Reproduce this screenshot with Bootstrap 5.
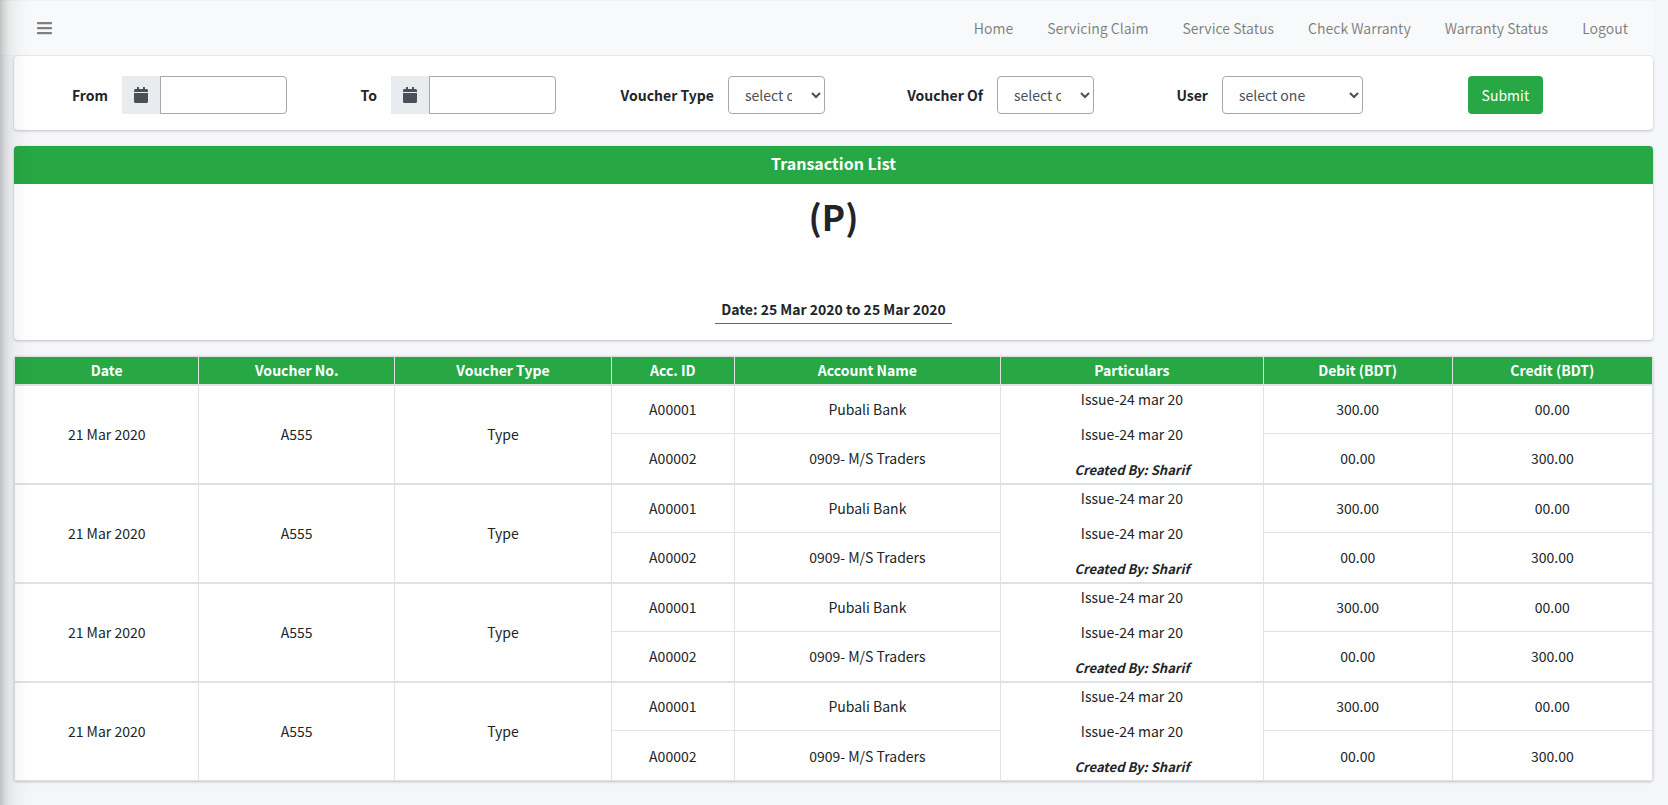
<!DOCTYPE html>
<html lang="en">
<head>
<meta charset="utf-8">
<meta name="viewport" content="width=device-width, initial-scale=1">
<title>Transaction List</title>
<link href="https://cdn.jsdelivr.net/npm/bootstrap@5.3.0/dist/css/bootstrap.min.css" rel="stylesheet">
<style>
  :root { --green: #28a745; --line: #dee2e6; }
  body {
    font-family: "Source Sans Pro", "Noto Sans CJK JP", sans-serif;
    font-size: 14px; line-height: 24px; color: #212529; background: #f4f6f9;
  }
  .page-wrap { padding: 0 15px 24px 14px; }
  .top-nav { height: 56px; padding: 0 8px 0 0; margin-left: -14px; background: #f8f9fa; border-top: 1px solid #f1f2f4; border-bottom: 1px solid #f1f2f4; }
  .top-nav .nav-link { padding: 8px 17px; color: rgba(0,0,0,.5); }
  .menu-toggle { margin-left: 24px; line-height: 0; }
  .panel { border: 0; border-radius: 4px; margin-bottom: 16px; box-shadow: 0 0 1px rgba(0,0,0,.125), 0 1px 3px rgba(0,0,0,.2); }
  .filter-form { padding: 20px 13px 16px 12px; }
  .filter-form label { margin-right: 14px; white-space: nowrap; }
  .filter-form .form-control { height: 38px; font-size: 14px; color: #495057; border-color: #a2a8ad; border-radius: 4px; padding: 6px 12px; }
  .filter-form select.form-control { appearance: auto; width: 97px; flex: none; padding-right: 16px; padding-left: 12px; }
  .filter-form select.wide { width: 141px; padding-right: 12px; }
  .date-group { width: 165px; flex: none; }
  .date-group .input-group-text { width: 39px; padding: 0; justify-content: center; background: #e9ecef; border: 0; border-radius: 0; color: #495057; }
  .filter-form .date-group .form-control { border-radius: 0 4px 4px 0; }
  .btn-green { height: 38px; width: 75px; padding: 0; font-size: 14px; color: #fff; background: var(--green); border-radius: 4px; }
  .panel-title { height: 38px; background: var(--green); color: #fff; font-size: 16px; line-height: 34px; border-radius: 4px 4px 0 0; }
  .report-head { height: 156px; padding: 8px 0 16px; }
  .report-name { font-size: 35px; line-height: 48px; font-weight: 700; }
  .report-date { padding: 0 6px; border-bottom: 1px solid #666; line-height: 27px; }
  .ledger { margin: 0; width: 100%; border-collapse: collapse; table-layout: fixed; font-size: 14px; line-height: 24px; text-align: center; color: #212529; background: #fff; }
  .ledger th, .ledger td { border: 1px solid var(--line); padding: 0; vertical-align: middle; }
  .ledger thead th { background: var(--green); color: #fff; height: 28px; border-bottom-width: 2px; }
  .ledger tbody { border-top: 2px solid var(--line); }
  .ledger tbody tr { height: 50px; }
  .ledger tbody tr:first-child { height: 49px; }
  .ledger p { line-height: 19px; margin-bottom: 16px; }
  .ledger .created { margin-bottom: 0; font-size: 13px; font-weight: 700; font-style: italic; }
  .side-drawer { position: fixed; top: -40px; bottom: -40px; left: -250px; width: 250px; background: #343a40; box-shadow: 0 14px 28px rgba(0,0,0,.25), 0 10px 10px rgba(0,0,0,.22); }
</style>
</head>
<body>
<div class="page-wrap">
  <nav class="top-nav d-flex align-items-center justify-content-between">
    <button type="button" class="btn menu-toggle" aria-label="Toggle menu">
      <svg width="15" height="16" viewBox="0 0 448 512" preserveAspectRatio="none" fill="#808080"><path d="M16 132h416c8.837 0 16-7.163 16-16V76c0-8.837-7.163-16-16-16H16C7.163 60 0 67.163 0 76v40c0 8.837 7.163 16 16 16zm0 160h416c8.837 0 16-7.163 16-16v-40c0-8.837-7.163-16-16-16H16c-8.837 0-16 7.163-16 16v40c0 8.837 7.163 16 16 16zm0 160h416c8.837 0 16-7.163 16-16v-40c0-8.837-7.163-16-16-16H16c-8.837 0-16 7.163-16 16v40c0 8.837 7.163 16 16 16z"/></svg>
    </button>
    <ul class="nav flex-nowrap">
      <li class="nav-item"><a class="nav-link" href="#">Home</a></li>
      <li class="nav-item"><a class="nav-link" href="#">Servicing Claim</a></li>
      <li class="nav-item"><a class="nav-link" href="#">Service Status</a></li>
      <li class="nav-item"><a class="nav-link" href="#">Check Warranty</a></li>
      <li class="nav-item"><a class="nav-link" href="#">Warranty Status</a></li>
      <li class="nav-item"><a class="nav-link" href="#">Logout</a></li>
    </ul>
  </nav>

  <main>
    <section class="card panel">
      <form class="filter-form">
        <div class="row g-0">
          <div class="col-2 px-2 d-flex align-items-center justify-content-end">
            <label for="from" class="fw-bold">From</label>
            <div class="input-group date-group">
              <span class="input-group-text"><svg width="14" height="16" viewBox="0 0 448 512" fill="currentColor"><path d="M12 192h424c6.600 0 12 5.400 12 12v260c0 26.500-21.500 48-48 48H48c-26.500 0-48-21.500-48-48V204c0-6.600 5.400-12 12-12zm436-44v-36c0-26.500-21.500-48-48-48h-48V12c0-6.600-5.400-12-12-12h-40c-6.600 0-12 5.400-12 12v52H160V12c0-6.600-5.400-12-12-12h-40c-6.600 0-12 5.400-12 12v52H48C21.500 64 0 85.500 0 112v36c0 6.600 5.400 12 12 12h424c6.600 0 12-5.400 12-12z"/></svg></span>
              <input type="text" class="form-control" id="from">
            </div>
          </div>
          <div class="col-2 px-2 d-flex align-items-center justify-content-end">
            <label for="to" class="fw-bold">To</label>
            <div class="input-group date-group">
              <span class="input-group-text"><svg width="14" height="16" viewBox="0 0 448 512" fill="currentColor"><path d="M12 192h424c6.600 0 12 5.400 12 12v260c0 26.500-21.500 48-48 48H48c-26.500 0-48-21.500-48-48V204c0-6.600 5.400-12 12-12zm436-44v-36c0-26.500-21.500-48-48-48h-48V12c0-6.600-5.400-12-12-12h-40c-6.600 0-12 5.400-12 12v52H160V12c0-6.600-5.400-12-12-12h-40c-6.600 0-12 5.400-12 12v52H48C21.500 64 0 85.500 0 112v36c0 6.600 5.400 12 12 12h424c6.600 0 12-5.400 12-12z"/></svg></span>
              <input type="text" class="form-control" id="to">
            </div>
          </div>
          <div class="col-2 px-2 d-flex align-items-center justify-content-end">
            <label for="vtype" class="fw-bold">Voucher Type</label>
            <select id="vtype" class="form-control"><option>select one</option></select>
          </div>
          <div class="col-2 px-2 d-flex align-items-center justify-content-end">
            <label for="vof" class="fw-bold">Voucher Of</label>
            <select id="vof" class="form-control"><option>select one</option></select>
          </div>
          <div class="col-2 px-2 d-flex align-items-center justify-content-end">
            <label for="user" class="fw-bold">User</label>
            <select id="user" class="form-control wide"><option>select one</option></select>
          </div>
          <div class="col-2 px-2 text-center">
            <button type="submit" class="btn btn-green">Submit</button>
          </div>
        </div>
      </form>
    </section>

    <section class="card panel">
      <div class="panel-title text-center fw-bold">Transaction List</div>
      <div class="report-head d-flex flex-column align-items-center justify-content-between">
        <h1 class="report-name m-0">(P)</h1>
        <div class="report-date fw-bold">Date: 25 Mar 2020 to 25 Mar 2020</div>
      </div>
    </section>

    <section class="card panel">
      <table class="ledger">
        <colgroup>
          <col style="width:11.26%"><col style="width:11.94%"><col style="width:13.24%"><col style="width:7.5%"><col style="width:16.26%"><col style="width:16.04%"><col style="width:11.53%"><col style="width:12.23%">
        </colgroup>
        <thead>
          <tr><th>Date</th><th>Voucher No.</th><th>Voucher Type</th><th>Acc. ID</th><th>Account Name</th><th>Particulars</th><th>Debit (BDT)</th><th>Credit (BDT)</th></tr>
        </thead>
        <tbody>
          <tr><td rowspan="2">21 Mar 2020</td><td rowspan="2">A555</td><td rowspan="2">Type</td><td>A00001</td><td>Pubali Bank</td><td rowspan="2"><p>Issue-24 mar 20</p><p>Issue-24 mar 20</p><p class="created">Created By: Sharif</p></td><td>300.00</td><td>00.00</td></tr>
          <tr><td>A00002</td><td>0909- M/S Traders</td><td>00.00</td><td>300.00</td></tr>
        </tbody>
        <tbody>
          <tr><td rowspan="2">21 Mar 2020</td><td rowspan="2">A555</td><td rowspan="2">Type</td><td>A00001</td><td>Pubali Bank</td><td rowspan="2"><p>Issue-24 mar 20</p><p>Issue-24 mar 20</p><p class="created">Created By: Sharif</p></td><td>300.00</td><td>00.00</td></tr>
          <tr><td>A00002</td><td>0909- M/S Traders</td><td>00.00</td><td>300.00</td></tr>
        </tbody>
        <tbody>
          <tr><td rowspan="2">21 Mar 2020</td><td rowspan="2">A555</td><td rowspan="2">Type</td><td>A00001</td><td>Pubali Bank</td><td rowspan="2"><p>Issue-24 mar 20</p><p>Issue-24 mar 20</p><p class="created">Created By: Sharif</p></td><td>300.00</td><td>00.00</td></tr>
          <tr><td>A00002</td><td>0909- M/S Traders</td><td>00.00</td><td>300.00</td></tr>
        </tbody>
        <tbody>
          <tr><td rowspan="2">21 Mar 2020</td><td rowspan="2">A555</td><td rowspan="2">Type</td><td>A00001</td><td>Pubali Bank</td><td rowspan="2"><p>Issue-24 mar 20</p><p>Issue-24 mar 20</p><p class="created">Created By: Sharif</p></td><td>300.00</td><td>00.00</td></tr>
          <tr><td>A00002</td><td>0909- M/S Traders</td><td>00.00</td><td>300.00</td></tr>
        </tbody>
      </table>
    </section>
  </main>
</div>
<aside class="side-drawer" aria-hidden="true"></aside>
<script src="https://cdn.jsdelivr.net/npm/bootstrap@5.3.0/dist/js/bootstrap.bundle.min.js"></script>
</body>
</html>
